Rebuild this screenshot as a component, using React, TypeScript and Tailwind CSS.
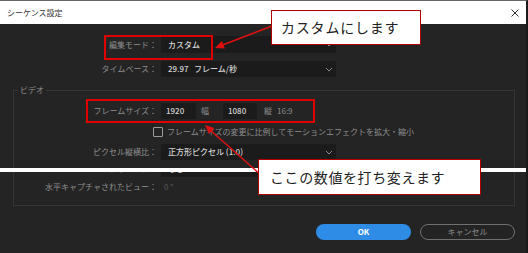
import React from "react";

function Chevron() {
  return (
    <svg width="8" height="5" viewBox="0 0 8 5" className="shrink-0">
      <path d="M1 1l3 3 3-3" fill="none" stroke="#8a8a8a" strokeWidth="1" />
    </svg>
  );
}

function Select({ value, w = "w-[175px]" }: { value: string; w?: string }) {
  return (
    <div
      className={`ml-[4px] ${w} h-[16px] bg-[#1b1b1b] flex items-center justify-between pl-[7px] pr-[3px]`}
    >
      <span className="text-[8px] font-medium text-[#d2d2d2] whitespace-pre">{value}</span>
      <Chevron />
    </div>
  );
}

function Field({ value, w, ml }: { value: string; w: string; ml: string }) {
  return (
    <div className={`${ml} ${w} h-[16px] bg-[#1b1b1b] flex items-center pl-[5px]`}>
      <span className="text-[8px] font-medium text-[#d2d2d2]">{value}</span>
    </div>
  );
}

function Label({ text, w }: { text: string; w: string }) {
  return (
    <span className={`${w} shrink-0 text-right text-[8px] text-[#8e8e8e] whitespace-nowrap`}>
      {text}
    </span>
  );
}

export default function App() {
  return (
    <div className="relative w-[528px] h-[253px] overflow-hidden bg-[#242424] border-t border-r-2 border-t-[#666] border-r-[#1a1a1a] font-['Noto_Sans_CJK_JP',sans-serif]">
      {/* title bar */}
      <div className="h-[23px] bg-white flex items-center justify-between pl-[7px] pr-[7px]">
        <span className="text-[8px] text-[#333]">シーケンス設定</span>
        <svg width="8" height="8" viewBox="0 0 8 8">
          <path d="M0.5 0.5l7 7M7.5 0.5l-7 7" stroke="#333" strokeWidth="1" />
        </svg>
      </div>

      {/* upper part of dialog */}
      <div className="h-[144px] flex flex-col pt-[12px]">
        <div className="flex items-center h-[17px]">
          <Label text="編集モード：" w="w-[157px]" />
          <div className="ml-[4px] w-[175px] h-[17px] bg-[#1b1b1b] flex items-center justify-between pl-[7px] pr-[3px]">
            <span className="text-[8px] font-medium text-[#d2d2d2]">カスタム</span>
            <Chevron />
          </div>
        </div>
        <div className="flex items-center h-[16px] mt-[8px]">
          <Label text="タイムベース：" w="w-[157px]" />
          <Select value="29.97   フレーム/秒" />
        </div>

        <fieldset className="mt-[8px] ml-[13px] mr-[11px] flex-1 min-h-0 border border-b-0 border-[#363636]">
          <legend className="ml-[4px] px-[2px] text-[8px] leading-[10px] text-[#8e8e8e]">ビデオ</legend>
          <div className="flex items-center h-[16px] mt-[8px]">
            <Label text="フレームサイズ：" w="w-[143px]" />
            <Field value="1920" w="w-[35px]" ml="ml-[4px]" />
            <span className="ml-[5px] text-[8px] text-[#8e8e8e]">幅</span>
            <Field value="1080" w="w-[34px]" ml="ml-[14px]" />
            <span className="ml-[7px] text-[8px] text-[#8e8e8e]">縦</span>
            <span className="ml-[5px] text-[8px] text-[#8e8e8e]">16:9</span>
          </div>
          <div className="flex items-center h-[12px] mt-[7px] pl-[139px]">
            <span className="w-[10px] h-[10px] border border-[#9a9a9a] rounded-[1px]" />
            <span className="ml-[4px] text-[8px] text-[#8e8e8e] whitespace-nowrap">
              フレームサイズの変更に比例してモーションエフェクトを拡大・縮小
            </span>
          </div>
          <div className="flex items-center h-[16px] mt-[6px]">
            <Label text="ピクセル縦横比：" w="w-[143px]" />
            <Select value="正方形ピクセル (1.0)" />
          </div>
        </fieldset>
      </div>

      {/* spliced screenshot seam */}
      <div className="h-[4px] bg-white" />

      {/* lower part of dialog */}
      <div className="flex flex-col">
        <div className="ml-[13px] mr-[11px] border border-t-0 border-[#363636] pb-[13px]">
          <div className="h-[5px] overflow-hidden">
            <div className="flex items-center h-[16px] -mt-[11px]">
              <Label text="フィールド：" w="w-[143px]" />
              <Select value="なし" />
            </div>
          </div>
          <div className="flex items-center h-[10px] mt-[5px]">
            <Label text="水平キャプチャされたビュー：" w="w-[143px]" />
            <span className="ml-[7px] text-[8px] text-[#5a5a5a]">0 °</span>
          </div>
        </div>
        <div className="flex justify-end gap-[9px] pr-[11px] mt-[18px]">
          <button className="w-[95px] h-[16px] rounded-full bg-[#2e8ce6] text-white text-[8px] font-bold flex items-center justify-center">
            OK
          </button>
          <button className="w-[95px] h-[16px] rounded-full border border-[#707070] text-[#8e8e8e] text-[8px] flex items-center justify-center">
            キャンセル
          </button>
        </div>
      </div>

      {/* annotation highlight boxes */}
      <div className="absolute left-[104px] top-[34px] w-[109px] h-[25px] border-2 border-[#e00000]" />
      <div className="absolute left-[86px] top-[98px] w-[229px] h-[24px] border-2 border-[#e00000]" />

      {/* arrows */}
      <svg className="absolute left-0 top-0 pointer-events-none" width="528" height="253" viewBox="0 0 528 253">
        <line x1="272" y1="25" x2="220" y2="45" stroke="#e01010" strokeWidth="1.5" />
        <polygon points="215,47 224.9,47.4 221.9,40" fill="#e01010" />
        <line x1="262" y1="175" x2="209" y2="128" stroke="#e01010" strokeWidth="1.5" />
        <polygon points="205,124 214.4,127 209,133" fill="#e01010" />
      </svg>

      {/* callouts */}
      <div className="absolute left-[271px] top-[9px] w-[150px] h-[35px] bg-white border-[1.5px] border-[#b00000] flex items-center pl-[9px]">
        <span className="text-[14px] tracking-[0.8px] text-[#222] whitespace-nowrap">カスタムにします</span>
      </div>
      <div className="absolute left-[258px] top-[158px] w-[223px] h-[36px] bg-white border-[1.5px] border-[#b00000] flex items-center pl-[11px]">
        <span className="text-[14px] tracking-[0.6px] text-[#222] whitespace-nowrap">ここの数値を打ち変えます</span>
      </div>
    </div>
  );
}
